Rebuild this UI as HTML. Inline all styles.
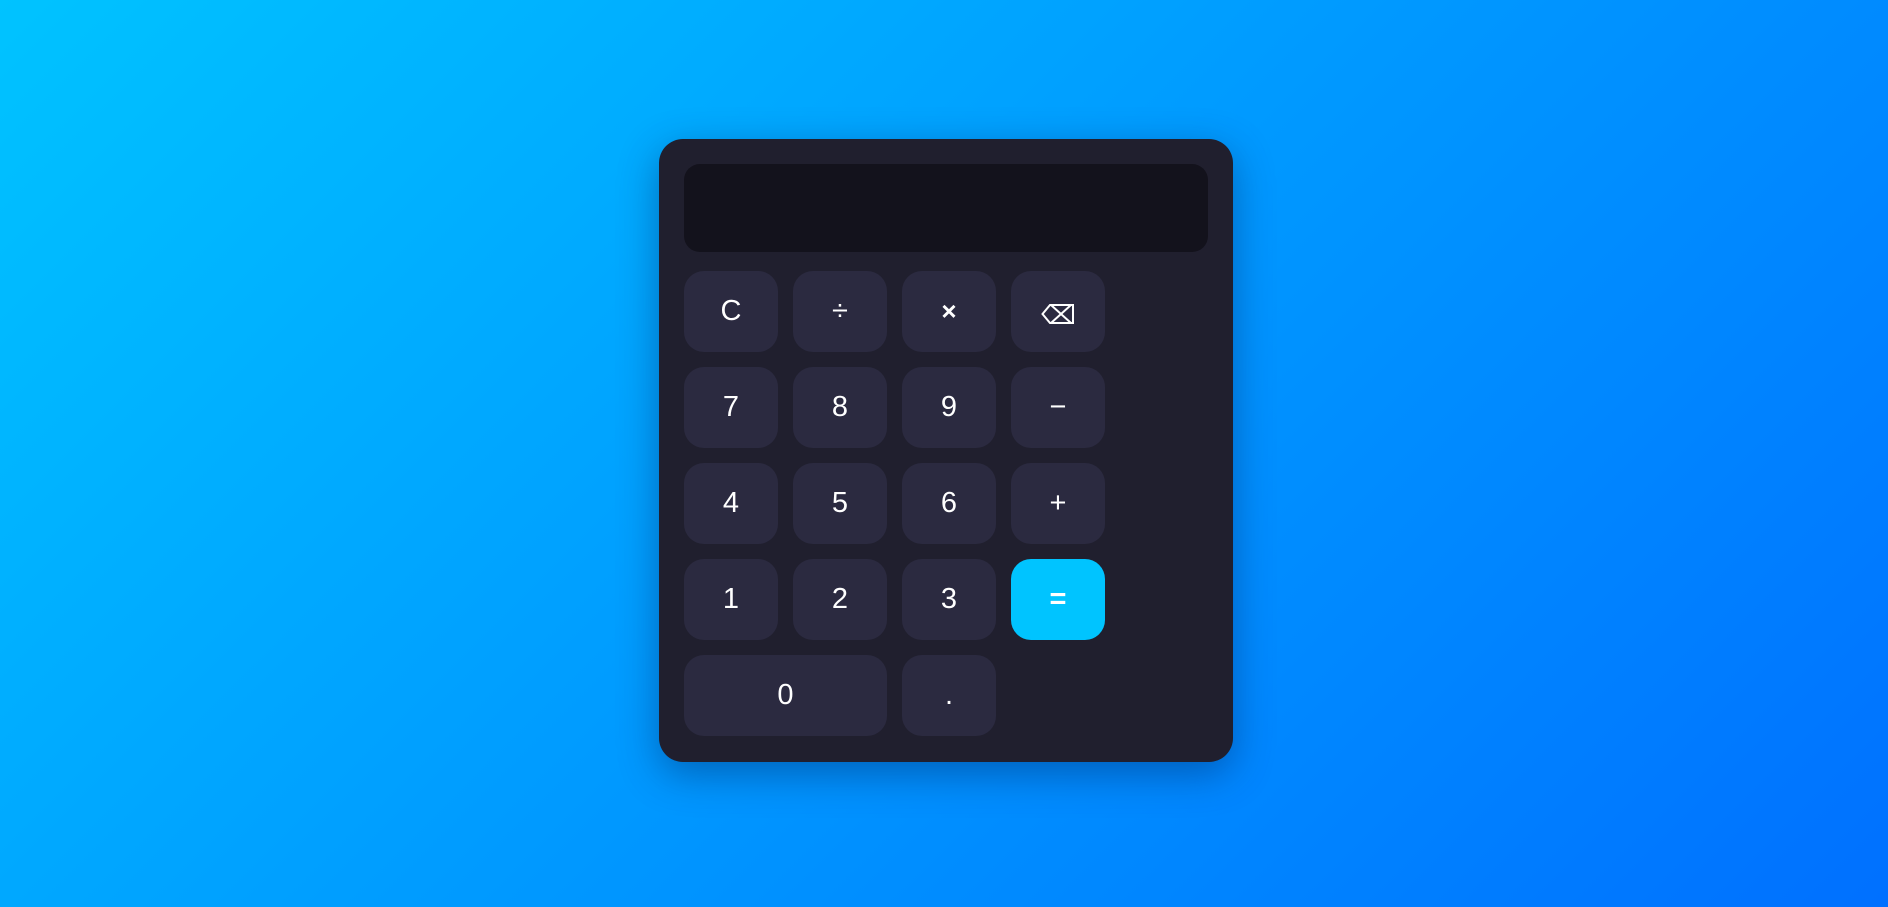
<!DOCTYPE html>
<html><head><meta charset="utf-8"><style>
html,body{margin:0;padding:0;width:1888px;height:907px;overflow:hidden}
body{background:linear-gradient(135deg,#00c3ff 0%,#0099ff 50%,#0070ff 100%);font-family:"Liberation Sans",Arial,sans-serif;position:relative}
.calc{position:absolute;left:659px;top:139px;width:524px;height:573px;padding:25px;background:#201f2e;border-radius:24px;box-shadow:0 12px 40px rgba(0,40,100,.45)}
.disp{height:88px;background:#13121c;border-radius:16px;margin-bottom:19px}
.grid{display:grid;grid-template-columns:repeat(4,94px);grid-auto-rows:81px;gap:15px}
.b{background:#2b2a40;border-radius:20px;color:#fff;font-size:29px;display:flex;align-items:center;justify-content:center}
.eq{background:#00c4ff;font-weight:bold}
.z{grid-column:span 2}
</style></head><body>
<div class="calc">
<div class="disp"></div>
<div class="grid">
<div class="b">C</div><div class="b">÷</div><div class="b" style="font-weight:bold;font-size:26px">×</div>
<div class="b"><svg width="34" height="22" viewBox="0 0 34 22" style="margin-top:4px"><path d="M1.5 11 L9 2 H32 V20 H9 Z M10 2 L30 20 M30 2 L10 20" fill="none" stroke="#fff" stroke-width="2"/></svg></div>
<div class="b">7</div><div class="b">8</div><div class="b">9</div><div class="b">−</div>
<div class="b">4</div><div class="b">5</div><div class="b">6</div><div class="b">+</div>
<div class="b">1</div><div class="b">2</div><div class="b">3</div><div class="b eq">=</div>
<div class="b z">0</div><div class="b">.</div>
</div></div>
</body></html>
